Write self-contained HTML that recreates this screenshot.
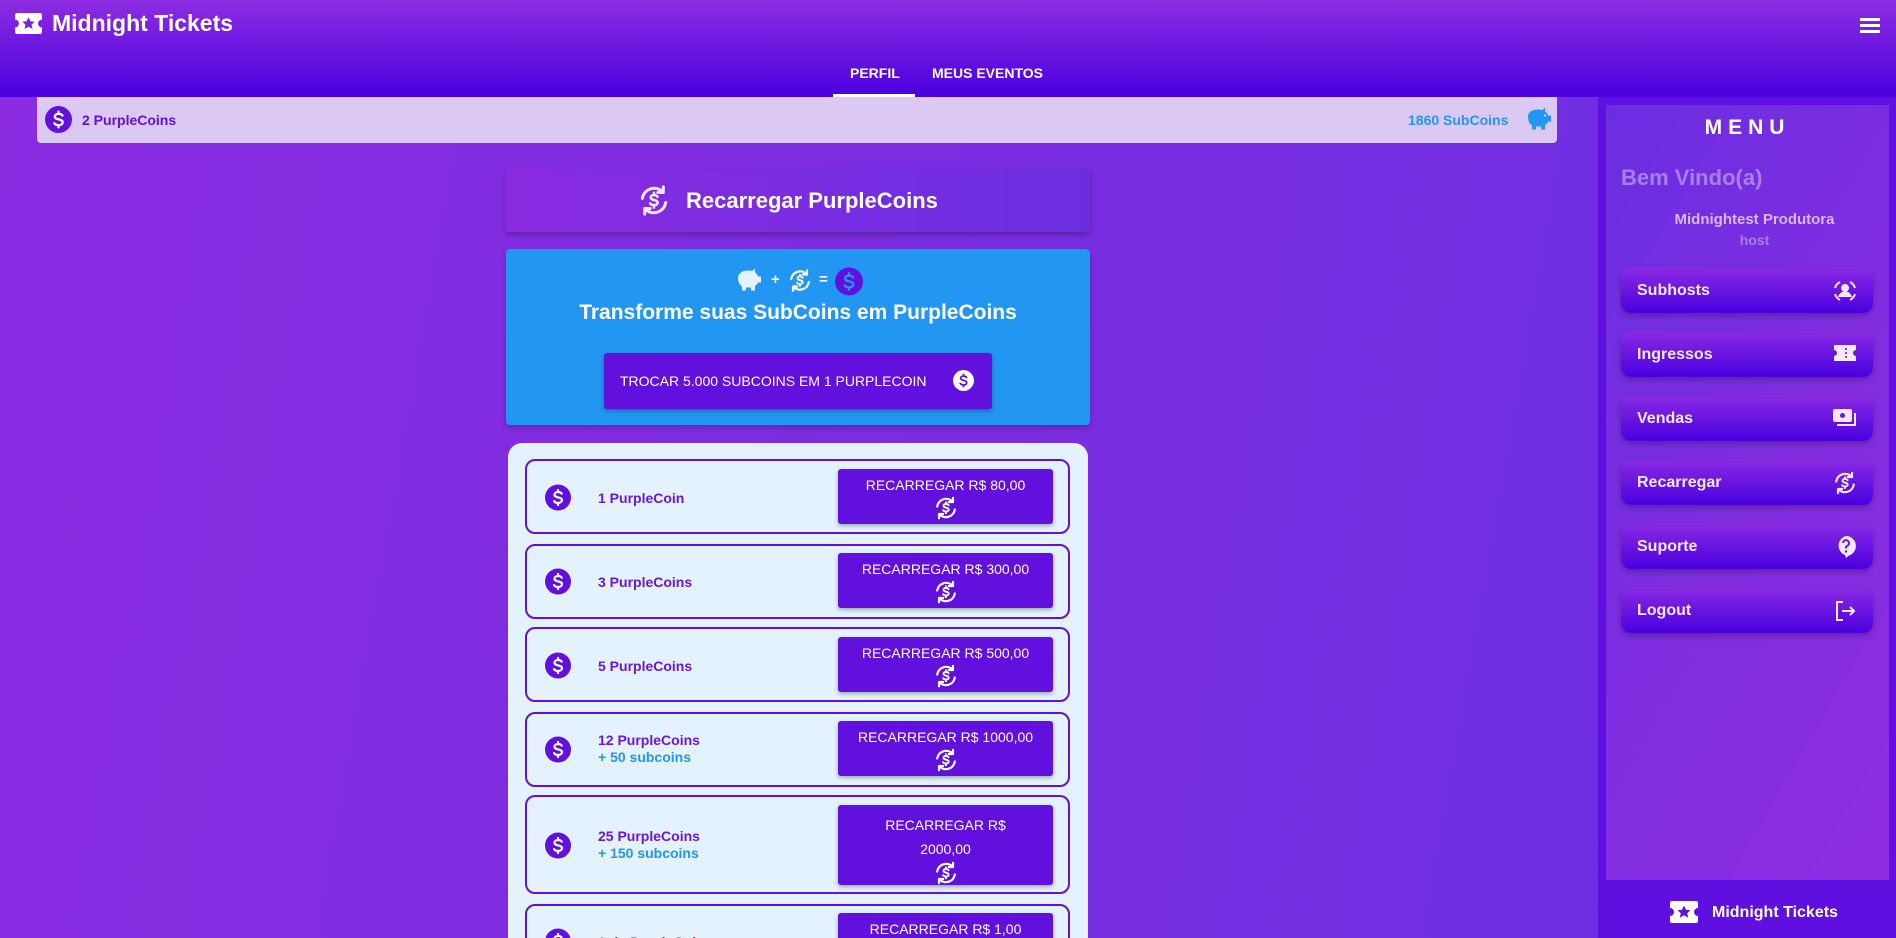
<!DOCTYPE html>
<html style="width:1896px;height:938px;overflow:hidden"><head><meta charset="utf-8">
<style>
*{margin:0;padding:0;box-sizing:border-box}
body{width:1896px;height:938px;overflow:hidden;font-family:"Liberation Sans",sans-serif;font-weight:bold;background:linear-gradient(100deg,#8a2be2 0%,#7a2de0 50%,#6a2ee0 100%);position:relative}
.a{position:absolute}
.hdr{left:0;top:0;width:1896px;height:97px;background:linear-gradient(180deg,#8e2de2,#4a00e0)}
.btn{background:#6210de;color:#fff;box-shadow:0 2px 4px rgba(0,0,0,.3);border-radius:3px;text-align:center;font-weight:normal}
.item{left:525px;width:545px;border:2px solid #6210de;border-radius:10px;background:#e3f2fd}
.mi{left:1621px;width:252px;height:46px;border-radius:10px;background:linear-gradient(180deg,#8a2be2,#4a00e0);box-shadow:0 3px 6px rgba(0,0,0,.25);color:#f3e8ff;font-size:16px;padding:15px 16px}
.mi svg{position:absolute;right:16px;top:12px}
</style></head><body>
<svg width="0" height="0" style="position:absolute">
<symbol id="coin" viewBox="0 0 24 24"><circle cx="12" cy="12" r="12" fill="currentColor"/><path d="M15.5 8.5c-.6-1-1.8-1.5-3.5-1.5-2 0-3.3 1-3.3 2.4 0 3.2 7 1.8 7 5 0 1.5-1.4 2.6-3.7 2.6-1.8 0-3.1-.6-3.7-1.7M12 5v2M12 17v2" stroke="var(--s,#fff)" stroke-width="2" fill="none" stroke-linecap="round"/></symbol>
<symbol id="rec" viewBox="0 0 24 24"><g fill="none" stroke="currentColor" stroke-width="2.2" stroke-linecap="round" stroke-linejoin="round"><path d="M3.2 10.5A9 9 0 0 1 18.5 5.5"/><path d="M20.8 13.5A9 9 0 0 1 5.5 18.5"/><path d="M19 1.8v4.2h-4.2"/><path d="M5 22.2V18h4.2"/><path d="M14.6 9.2c-.5-.8-1.4-1.3-2.6-1.3-1.5 0-2.5.8-2.5 1.8 0 2.5 5.2 1.4 5.2 3.9 0 1.1-1.1 1.9-2.8 1.9-1.3 0-2.3-.5-2.8-1.3M12 6.2v1.6M12 15.5v1.8" stroke-width="1.9"/></g></symbol>
<symbol id="tix" viewBox="0 0 28 22"><path d="M2 0h24a2 2 0 0 1 2 2v5a4 4 0 0 0 0 8v5a2 2 0 0 1-2 2H2a2 2 0 0 1-2-2v-5a4 4 0 0 0 0-8V2a2 2 0 0 1 2-2z" fill="#fff"/><path d="M14 4.5l2 4.2 4.5.5-3.3 3 1 4.5-4.2-2.4-4.2 2.4 1-4.5-3.3-3 4.5-.5z" fill="currentColor"/></symbol>
<symbol id="pig" viewBox="0 0 28 24"><path d="M4 10c0-4 4-7 10-7 2 0 3 .3 4 .6L21 1v4c1.5 1 2.5 2.3 3 4h3v6h-3c-.6 1.5-1.6 2.6-3 3.4V23h-4v-3h-5v3H8v-4C5.5 17.5 4 14 4 10z" fill="currentColor"/><circle cx="21" cy="9" r="1" fill="#fff"/></symbol>
</svg>

<div class="a hdr"></div>
<svg class="a" style="left:15px;top:13px;color:#7b20e2" width="27" height="21"><use href="#tix"/></svg>
<div class="a" style="left:52px;top:10px;color:#fff;font-size:23px">Midnight Tickets</div>
<div class="a" style="left:1860px;top:18px;width:20px;height:3px;background:#fff;box-shadow:0 6px 0 #fff,0 12px 0 #fff"></div>
<div class="a" style="left:850px;top:65px;color:#fff;font-size:14px">PERFIL</div>
<div class="a" style="left:932px;top:65px;color:#fff;font-size:14px">MEUS EVENTOS</div>
<div class="a" style="left:833px;top:94px;width:82px;height:3px;background:#fff"></div>

<div class="a" style="left:37px;top:97px;width:1520px;height:46px;background:#dbc8f3;border-radius:0 0 4px 4px"></div>
<svg class="a" style="left:45px;top:106px;color:#6210de" width="27" height="27"><use href="#coin"/></svg>
<div class="a" style="left:82px;top:112px;color:#6210de;font-size:14px">2 PurpleCoins</div>
<div class="a" style="left:1408px;top:112px;color:#2196f3;font-size:14px">1860 SubCoins</div>
<svg class="a" style="left:1524px;top:106px;color:#2196f3" width="28" height="25"><use href="#pig"/></svg>

<div class="a" style="left:1598px;top:97px;width:298px;height:841px;background:#5f10e0"></div>
<div class="a" style="left:1606px;top:105px;width:283px;height:775px;background:linear-gradient(120deg,#6a2ee0,#7f2de0 50%,#8e2de2)"></div>
<div class="a" style="left:1606px;top:116px;width:283px;text-align:center;color:#fff;font-size:21px;letter-spacing:6px">MENU</div>
<div class="a" style="left:1621px;top:165px;color:#a77fe6;font-size:22px">Bem Vindo(a)</div>
<div class="a" style="left:1606px;top:211px;width:283px;text-align:center;color:#d9b8f3;font-size:15px;padding-left:14px">Midnightest Produtora</div>
<div class="a" style="left:1606px;top:232px;width:283px;text-align:center;color:#a77fe6;font-size:14px;padding-left:14px">host</div>

<div class="a mi" style="top:267px">Subhosts<svg width="24" height="24" viewBox="0 0 24 24" fill="none" stroke="#f3e8ff" stroke-width="2"><path d="M2 9a10 10 0 0 1 5-6M22 9a10 10 0 0 0-5-6M2 15a10 10 0 0 0 5 6M22 15a10 10 0 0 1-5 6"/><circle cx="12" cy="9" r="3" fill="#f3e8ff"/><path d="M6.5 17c1-2.5 3-3.5 5.5-3.5s4.5 1 5.5 3.5z" fill="#f3e8ff"/></svg></div>
<div class="a mi" style="top:331px">Ingressos<svg width="24" height="20" viewBox="0 0 24 20"><path d="M1 2h22v5a3 3 0 0 0 0 6v5H1v-5a3 3 0 0 0 0-6z" fill="#f3e8ff"/><path d="M13 5v2M13 9v2M13 13v2" stroke="#6a18e0" stroke-width="1.6"/></svg></div>
<div class="a mi" style="top:395px">Vendas<svg width="24" height="22" viewBox="0 0 24 22"><rect x="0" y="2" width="19" height="13" rx="2" fill="#f3e8ff"/><circle cx="9.5" cy="8.5" r="2.5" fill="#6a18e0"/><path d="M22 6v12H4" stroke="#f3e8ff" stroke-width="2" fill="none"/></svg></div>
<div class="a mi" style="top:459px">Recarregar<svg width="24" height="24" style="color:#f3e8ff"><use href="#rec"/></svg></div>
<div class="a mi" style="top:523px">Suporte<svg width="22" height="24" viewBox="0 0 22 24"><path d="M11 1a10 10 0 0 1 3 19.5L11 23l-1-3A10 10 0 0 1 11 1z" fill="#f3e8ff"/><path d="M8 8a3 3 0 1 1 4 3c-1 .5-1 1-1 2.5" stroke="#6a18e0" stroke-width="2" fill="none"/><circle cx="11" cy="16.5" r="1.2" fill="#6a18e0"/></svg></div>
<div class="a mi" style="top:587px">Logout<svg width="24" height="24" viewBox="0 0 24 24" fill="none" stroke="#f3e8ff" stroke-width="2"><path d="M10 3H4v18h6M9 12h12M17 8l4 4-4 4"/></svg></div>

<svg class="a" style="left:1670px;top:901px;color:#5f10e0" width="28" height="22"><use href="#tix"/></svg>
<div class="a" style="left:1712px;top:904px;color:#fff;font-size:16px">Midnight Tickets</div>

<div class="a" style="left:505px;top:169px;width:585px;height:63px;border-radius:4px;background:linear-gradient(90deg,#8a2be2,#6a2ee0);box-shadow:0 3px 6px rgba(0,0,0,.25)"></div>
<svg class="a" style="left:638px;top:184px;color:#f3e8ff" width="32" height="33"><use href="#rec"/></svg>
<div class="a" style="left:686px;top:188px;color:#fff;font-size:22px">Recarregar PurpleCoins</div>

<div class="a" style="left:506px;top:249px;width:584px;height:176px;border-radius:4px;background:#2196f3;box-shadow:0 3px 6px rgba(0,0,0,.2)"></div>
<svg class="a" style="left:734px;top:267px;color:#e3f2fd" width="28" height="25"><use href="#pig"/></svg>
<div class="a" style="left:771px;top:271px;color:#fff;font-size:15px">+</div>
<svg class="a" style="left:788px;top:268px;color:#fff" width="24" height="25"><use href="#rec"/></svg>
<div class="a" style="left:819px;top:271px;color:#fff;font-size:15px">=</div>
<svg class="a" style="left:835px;top:267px;color:#6210de;--s:#2196f3" width="28" height="29"><use href="#coin"/></svg>
<div class="a" style="left:506px;top:301px;width:584px;text-align:center;color:#fff;font-size:21px">Transforme suas SubCoins em PurpleCoins</div>
<div class="a btn" style="left:604px;top:353px;width:388px;height:56px;font-size:14px;line-height:56px;text-align:left;padding-left:16px">TROCAR 5.000 SUBCOINS EM 1 PURPLECOIN</div>
<svg class="a" style="left:953px;top:370px;color:#fff;--s:#6210de" width="21" height="21"><use href="#coin"/></svg>

<div class="a" style="left:508px;top:443px;width:580px;height:520px;border-radius:14px;background:#e3f2fd"></div>

<div class="a item" style="top:459px;height:75px"></div>
<div class="a item" style="top:544px;height:75px"></div>
<div class="a item" style="top:627px;height:75px"></div>
<div class="a item" style="top:712px;height:75px"></div>
<div class="a item" style="top:795px;height:99px"></div>
<div class="a item" style="top:904px;height:80px"></div>

<svg class="a" style="left:545px;top:484px;color:#6210de" width="26" height="27"><use href="#coin"/></svg>
<div class="a" style="left:598px;top:490px;color:#6a18d8;font-size:14px">1 PurpleCoin</div>
<svg class="a" style="left:545px;top:568px;color:#6210de" width="26" height="27"><use href="#coin"/></svg>
<div class="a" style="left:598px;top:574px;color:#6a18d8;font-size:14px">3 PurpleCoins</div>
<svg class="a" style="left:545px;top:652px;color:#6210de" width="26" height="27"><use href="#coin"/></svg>
<div class="a" style="left:598px;top:658px;color:#6a18d8;font-size:14px">5 PurpleCoins</div>
<svg class="a" style="left:545px;top:736px;color:#6210de" width="26" height="27"><use href="#coin"/></svg>
<div class="a" style="left:598px;top:732px;color:#6a18d8;font-size:14px">12 PurpleCoins</div>
<div class="a" style="left:598px;top:749px;color:#2196f3;font-size:14px">+ 50 subcoins</div>
<svg class="a" style="left:545px;top:832px;color:#6210de" width="26" height="27"><use href="#coin"/></svg>
<div class="a" style="left:598px;top:828px;color:#6a18d8;font-size:14px">25 PurpleCoins</div>
<div class="a" style="left:598px;top:845px;color:#2196f3;font-size:14px">+ 150 subcoins</div>
<svg class="a" style="left:545px;top:928px;color:#6210de" width="26" height="27"><use href="#coin"/></svg>
<div class="a" style="left:598px;top:934px;color:#6a18d8;font-size:14px">1 de PurpleCoin</div>

<div class="a btn" style="left:838px;top:469px;width:215px;height:55px;font-size:14px;padding-top:8px">RECARREGAR R$ 80,00<br><svg width="24" height="24" style="color:#fff;margin-top:3px"><use href="#rec"/></svg></div>
<div class="a btn" style="left:838px;top:553px;width:215px;height:55px;font-size:14px;padding-top:8px">RECARREGAR R$ 300,00<br><svg width="24" height="24" style="color:#fff;margin-top:3px"><use href="#rec"/></svg></div>
<div class="a btn" style="left:838px;top:637px;width:215px;height:55px;font-size:14px;padding-top:8px">RECARREGAR R$ 500,00<br><svg width="24" height="24" style="color:#fff;margin-top:3px"><use href="#rec"/></svg></div>
<div class="a btn" style="left:838px;top:721px;width:215px;height:55px;font-size:14px;padding-top:8px">RECARREGAR R$ 1000,00<br><svg width="24" height="24" style="color:#fff;margin-top:3px"><use href="#rec"/></svg></div>
<div class="a btn" style="left:838px;top:805px;width:215px;height:80px;font-size:14px;padding-top:8px;line-height:24px">RECARREGAR R$<br>2000,00<br><svg width="24" height="24" style="color:#fff"><use href="#rec"/></svg></div>
<div class="a btn" style="left:838px;top:913px;width:215px;height:55px;font-size:14px;padding-top:8px">RECARREGAR R$ 1,00</div>
</body></html>
